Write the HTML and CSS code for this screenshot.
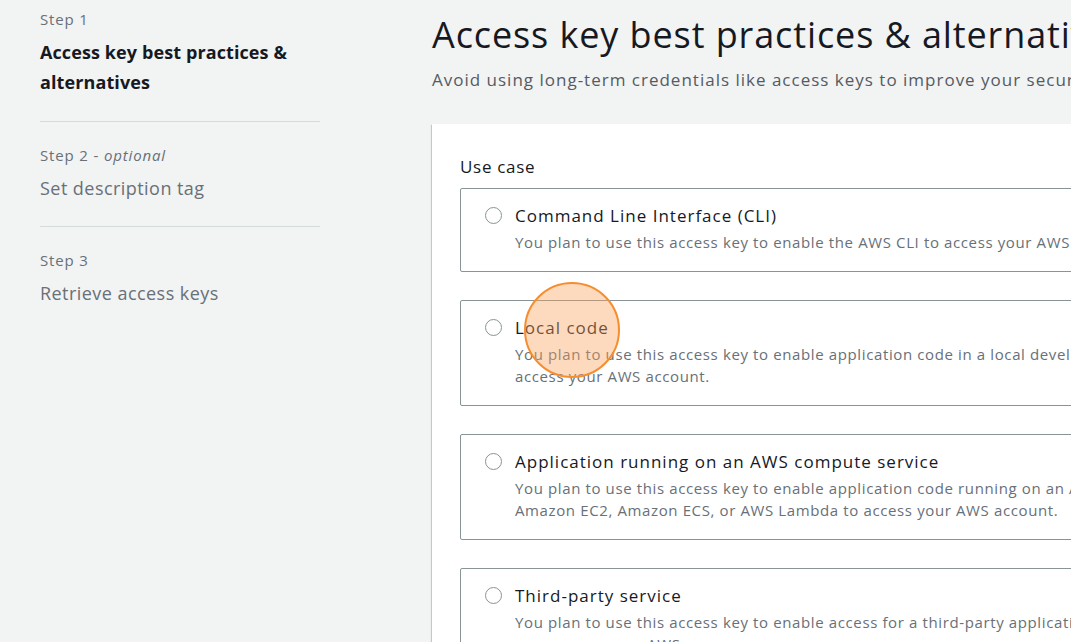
FILE: index.html
```html
<!DOCTYPE html>
<html lang="en">
<head>
<meta charset="utf-8">
<title>Access key best practices &amp; alternatives</title>
<link rel="stylesheet" href="styles.css">
</head>
<body>
<div class="page">
  <nav class="steps">
    <div class="step first">
      <div class="step-label">Step 1</div>
      <div class="step-title active">Access key best practices &amp; alternatives</div>
    </div>
    <div class="step">
      <div class="step-label">Step 2 - <i>optional</i></div>
      <div class="step-title">Set description tag</div>
    </div>
    <div class="step last">
      <div class="step-label">Step 3</div>
      <div class="step-title">Retrieve access keys</div>
    </div>
  </nav>
  <main class="main">
    <h1 class="heading">Access key best practices &amp; alternatives</h1>
    <p class="subtitle">Avoid using long-term credentials like access keys to improve your security. Consider the following use cases and alternatives.</p>
    <section class="card">
      <div class="field-label">Use case</div>
      <div class="options">
        <label class="option">
          <span class="radio"></span>
          <span class="option-text">
            <span class="option-title">Command Line Interface (CLI)</span>
            <span class="option-desc">You plan to use this access key to enable the AWS CLI to access your AWS account.</span>
          </span>
        </label>
        <label class="option">
          <span class="radio"></span>
          <span class="option-text">
            <span class="option-title">Local code</span>
            <span class="option-desc">You plan to use this access key to enable application code in a local development environment to<br>access your AWS account.</span>
          </span>
          <span class="highlight"></span>
        </label>
        <label class="option">
          <span class="radio"></span>
          <span class="option-text">
            <span class="option-title">Application running on an AWS compute service</span>
            <span class="option-desc">You plan to use this access key to enable application code running on an AWS compute service like<br>Amazon EC2, Amazon ECS, or AWS Lambda to access your AWS account.</span>
          </span>
        </label>
        <label class="option">
          <span class="radio"></span>
          <span class="option-text">
            <span class="option-title">Third-party service</span>
            <span class="option-desc">You plan to use this access key to enable access for a third-party application or service that monitors<br>or manages your AWS resources.</span>
          </span>
        </label>
      </div>
    </section>
  </main>
</div>
</body>
</html>
```
FILE: styles.css
```css
html, body {
  margin: 0;
  padding: 0;
  background: #f2f3f3;
  overflow: hidden;
  height: 642px;
}
body {
  font-family: "Open Sans", "Noto Sans", "Liberation Sans", sans-serif;
  color: #16191f;
}
.page {
  display: flex;
  align-items: flex-start;
  width: 1600px;
}
.steps {
  width: 280px;
  margin-left: 40px;
  flex: none;
}
.step {
  padding: 23px 0 23px;
  border-bottom: 1px solid #d5dbdb;
}
.step.first {
  padding-top: 9px;
  padding-bottom: 24px;
}
.step.last {
  border-bottom: none;
}
.step-label {
  font-size: 15px;
  line-height: 20px;
  letter-spacing: 0.85px;
  color: #687078;
  margin-bottom: 8px;
}
.step.first .step-label {
  margin-bottom: 8px;
}
.step-title {
  font-size: 18px;
  line-height: 30px;
  letter-spacing: 0.45px;
  color: #687078;
}
.step-title.active {
  font-weight: 700;
  letter-spacing: 0.1px;
  color: #16191f;
}
.main {
  margin-left: 112px;
  width: 900px;
  flex: none;
  padding-top: 13px;
}
.heading {
  margin: 0;
  font-size: 36px;
  line-height: 44px;
  letter-spacing: 0.9px;
  font-weight: 400;
  white-space: nowrap;
}
.subtitle {
  margin: 11px 0 0;
  font-size: 17px;
  line-height: 24px;
  letter-spacing: 1px;
  color: #545b64;
  white-space: nowrap;
}
.card {
  margin-top: 32px;
  background: #fff;
  padding: 32px 28px 40px;
  box-shadow: 0 1px 1px 0 rgba(0,28,36,.3), 1px 1px 1px 0 rgba(0,28,36,.15), -1px 1px 1px 0 rgba(0,28,36,.15);
}
.field-label {
  font-size: 17px;
  line-height: 22px;
  letter-spacing: 0.7px;
  margin-bottom: 10px;
}
.options {
  display: flex;
  flex-direction: column;
  gap: 28px;
}
.option {
  position: relative;
  display: flex;
  align-items: flex-start;
  gap: 13px;
  padding: 15px 24px 18px;
  border: 1px solid #879596;
  border-radius: 2px;
}
.radio {
  flex: none;
  width: 15px;
  height: 15px;
  border: 1.5px solid #879596;
  border-radius: 50%;
  margin-top: 3px;
}
.option-text {
  display: flex;
  flex-direction: column;
}
.option-title {
  font-size: 17px;
  line-height: 24px;
  letter-spacing: 1px;
  white-space: nowrap;
}
.option-desc {
  margin-top: 3px;
  font-size: 15px;
  line-height: 22px;
  letter-spacing: 0.62px;
  color: #687078;
  white-space: nowrap;
}
.highlight {
  position: absolute;
  left: 63px;
  top: -19px;
  width: 92px;
  height: 92px;
  border: 2px solid #f68d2e;
  border-radius: 50%;
  background: rgba(250, 160, 90, 0.4);
  pointer-events: none;
}
```
